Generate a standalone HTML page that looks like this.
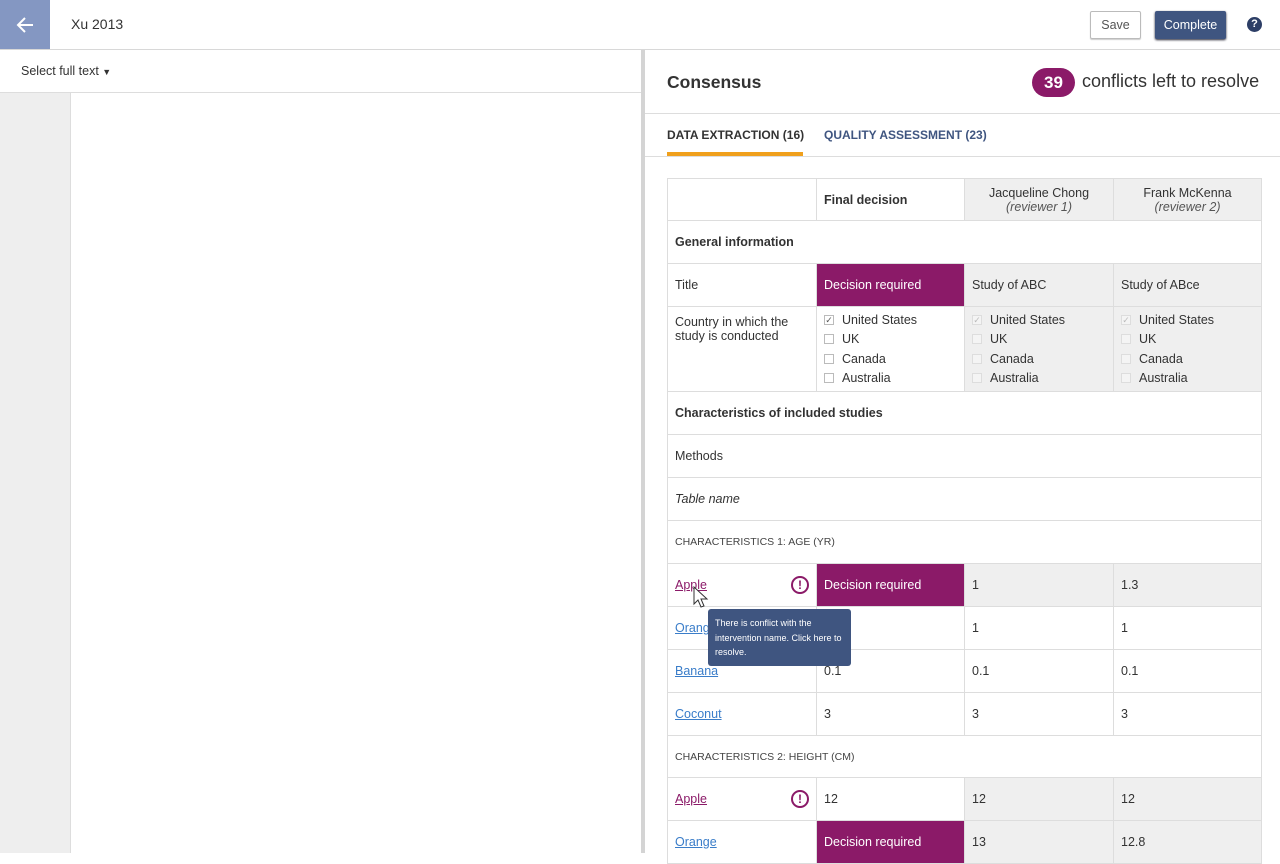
<!DOCTYPE html>
<html><head><style>
*{box-sizing:border-box;margin:0;padding:0}
body{width:1280px;height:853px;overflow:hidden;font-family:"Liberation Sans",sans-serif;color:#333;background:#fff;position:relative;font-size:13px}
.abs{position:absolute}
table{border-collapse:collapse;table-layout:fixed;position:absolute;left:667px;top:178px;width:594px}
td{border:1px solid #ddd;padding:0 7px;font-size:12.5px;color:#333;vertical-align:middle}
.g{background:#efefef}
.dr{background:#8b1a68;color:#fff}
.b{font-weight:bold}
a{text-decoration:underline;color:#3a7dc9}
a.p{color:#8b1a68}
.cb{display:flex;align-items:center;height:19.5px}
.cb i{display:inline-block;width:10px;height:10px;border:1px solid #bbb;margin-right:8px;font-style:normal;font-size:9px;line-height:8px;text-align:center;color:#555;background:#fff}
.g .cb i{border-color:#ddd;color:#bbb;background:#f4f4f4}
.sec{font-size:10.5px;color:#444}
.ex{position:absolute;right:7px;top:50%;margin-top:-9px;width:18px;height:18px;border:2px solid #8b1a68;border-radius:50%;color:#8b1a68;font-weight:bold;font-size:12px;text-align:center;line-height:14px}
</style></head><body>
<div class="abs" style="left:0;top:0;width:50px;height:49px;background:#8497c2"></div>
<svg class="abs" style="left:14px;top:14px" width="22" height="22" viewBox="0 0 22 22"><path d="M19 11H4M11 4L4 11L11 18" stroke="#fff" stroke-width="2" fill="none"/></svg>
<div class="abs" style="left:71px;top:16px;font-size:14px">Xu 2013</div>
<div class="abs" style="left:1090px;top:11px;width:51px;height:28px;border:1px solid #bbb;border-radius:2px;text-align:center;line-height:26px;font-size:12.5px;color:#555;box-shadow:0 1px 1px #ccc">Save</div>
<div class="abs" style="left:1155px;top:11px;width:71px;height:28px;background:#3f5580;border-radius:2px;text-align:center;line-height:28px;font-size:12.5px;color:#fff;box-shadow:0 1px 2px #223">Complete</div>
<div class="abs" style="left:1247px;top:17px;width:15px;height:15px;border-radius:50%;background:#2d3e66;color:#fff;font-size:11px;font-weight:bold;text-align:center;line-height:15px">?</div>
<div class="abs" style="left:0;top:49px;width:1280px;height:1px;background:#d8d8d8"></div>
<div class="abs" style="left:21px;top:64px;font-size:12.5px">Select full text <span style="font-size:9px">&#9660;</span></div>
<div class="abs" style="left:0;top:92px;width:641px;height:1px;background:#ddd"></div>
<div class="abs" style="left:0;top:93px;width:71px;height:760px;background:#eee;border-right:1px solid #ddd"></div>
<div class="abs" style="left:641px;top:50px;width:4px;height:803px;background:#d4d4d4"></div>
<div class="abs" style="left:667px;top:72px;font-size:17.5px;font-weight:bold">Consensus</div>
<div class="abs" style="left:1032px;top:68px;width:43px;height:29px;border-radius:15px;background:#8b1a68;color:#fff;font-size:17px;font-weight:bold;text-align:center;line-height:29px">39</div>
<div class="abs" style="left:1082px;top:71px;font-size:18px;color:#333">conflicts left to resolve</div>
<div class="abs" style="left:645px;top:113px;width:635px;height:1px;background:#ddd"></div>
<div class="abs" style="left:667px;top:128px;font-size:12px;font-weight:bold;color:#333">DATA EXTRACTION (16)</div>
<div class="abs" style="left:824px;top:128px;font-size:12px;font-weight:bold;color:#3f5580">QUALITY ASSESSMENT (23)</div>
<div class="abs" style="left:667px;top:152px;width:136px;height:4px;background:#f0a01c"></div>
<div class="abs" style="left:645px;top:156px;width:635px;height:1px;background:#ddd"></div>
<table>
<colgroup><col style="width:149px"><col style="width:148px"><col style="width:149px"><col style="width:148px"></colgroup>
<tr style="height:42px"><td></td><td class="b">Final decision</td><td class="g" style="text-align:center;line-height:14px">Jacqueline Chong<br><i style="color:#555">(reviewer 1)</i></td><td class="g" style="text-align:center;line-height:14px">Frank McKenna<br><i style="color:#555">(reviewer 2)</i></td></tr>
<tr style="height:43px"><td colspan="4" class="b">General information</td></tr>
<tr style="height:43px"><td>Title</td><td class="dr">Decision required</td><td class="g">Study of ABC</td><td class="g">Study of ABce</td></tr>
<tr style="height:85px"><td style="vertical-align:top;padding-top:8px;line-height:14px">Country in which the study is conducted</td>
<td><div class="cb"><i>&#10003;</i>United States</div><div class="cb"><i></i>UK</div><div class="cb"><i></i>Canada</div><div class="cb"><i></i>Australia</div></td>
<td class="g"><div class="cb"><i>&#10003;</i>United States</div><div class="cb"><i></i>UK</div><div class="cb"><i></i>Canada</div><div class="cb"><i></i>Australia</div></td>
<td class="g"><div class="cb"><i>&#10003;</i>United States</div><div class="cb"><i></i>UK</div><div class="cb"><i></i>Canada</div><div class="cb"><i></i>Australia</div></td></tr>
<tr style="height:43px"><td colspan="4" class="b">Characteristics of included studies</td></tr>
<tr style="height:43px"><td colspan="4">Methods</td></tr>
<tr style="height:43px"><td colspan="4"><i>Table name</i></td></tr>
<tr style="height:43px"><td colspan="4" class="sec">CHARACTERISTICS 1: AGE (YR)</td></tr>
<tr style="height:43px"><td style="position:relative"><a class="p">Apple</a><span class="ex">!</span></td><td class="dr">Decision required</td><td class="g">1</td><td class="g">1.3</td></tr>
<tr style="height:43px"><td><a>Orange</a></td><td></td><td>1</td><td>1</td></tr>
<tr style="height:43px"><td><a>Banana</a></td><td>0.1</td><td>0.1</td><td>0.1</td></tr>
<tr style="height:43px"><td><a>Coconut</a></td><td>3</td><td>3</td><td>3</td></tr>
<tr style="height:42px"><td colspan="4" class="sec">CHARACTERISTICS 2: HEIGHT (CM)</td></tr>
<tr style="height:43px"><td style="position:relative"><a class="p">Apple</a><span class="ex">!</span></td><td>12</td><td class="g">12</td><td class="g">12</td></tr>
<tr style="height:43px"><td><a>Orange</a></td><td class="dr">Decision required</td><td class="g">13</td><td class="g">12.8</td></tr>
</table>
<div class="abs" style="left:708px;top:609px;width:143px;height:57px;background:#3f5580;border-radius:3px;color:#fff;font-size:9px;line-height:14.5px;padding:7px 7px">There is conflict with the intervention name. Click here to resolve.</div>
<svg class="abs" style="left:693px;top:586px" width="16" height="24" viewBox="0 0 16 24"><path d="M1 1L1 18L5 14L8 21L11 20L8 13L14 13Z" fill="#fff" stroke="#333" stroke-width="1"/></svg>
</body></html>
